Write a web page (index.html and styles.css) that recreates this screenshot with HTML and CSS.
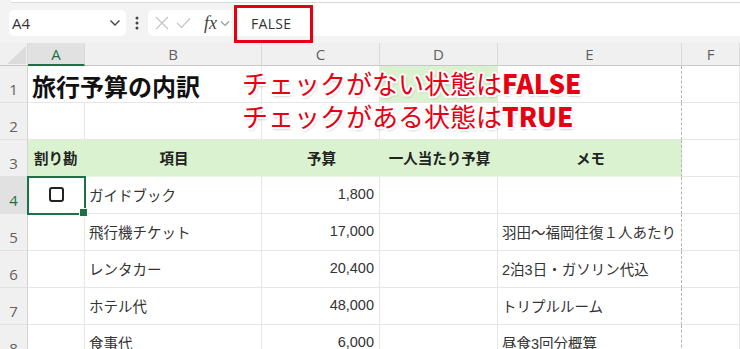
FILE: index.html
```html
<!DOCTYPE html>
<html lang="ja">
<head>
  <meta charset="UTF-8">
  <meta name="viewport" content="width=device-width, initial-scale=1.0">
  <title>旅行予算の内訳</title>
  <link rel="stylesheet" href="styles.css">
</head>
<body>

  <!-- Formula bar -->
  <div class="topbar">
    <div class="ribbon-edge"></div>
    <div class="formula-row">
      <div class="namebox">
        <span>A4</span>
        <svg width="12" height="8" viewBox="0 0 12 8"><path d="M1.5 1.5 L6 6 L10.5 1.5" fill="none" stroke="#444" stroke-width="1.4"/></svg>
      </div>
      <div class="more">
        <svg width="4" height="14" viewBox="0 0 4 14"><circle cx="2" cy="2" r="1.5" fill="#444"/><circle cx="2" cy="7" r="1.5" fill="#444"/><circle cx="2" cy="12" r="1.5" fill="#444"/></svg>
      </div>
      <div class="fx-tools">
        <svg width="14" height="14" viewBox="0 0 14 14"><path d="M1 1 L13 13 M13 1 L1 13" stroke="#c4c4c4" stroke-width="1.2"/></svg>
        <svg width="15" height="12" viewBox="0 0 15 12"><path d="M1 6 L5.5 10.5 L14 1.5" fill="none" stroke="#c4c4c4" stroke-width="1.2"/></svg>
        <span class="fx">fx</span>
        <svg width="10" height="7" viewBox="0 0 10 7"><path d="M1 1.5 L5 5.5 L9 1.5" fill="none" stroke="#999" stroke-width="1.2"/></svg>
      </div>
      <div class="formula-input"><span>FALSE</span></div>
    </div>
  </div>

  <!-- Sheet -->
  <div class="sheet">
    <div class="corner"><svg width="28" height="23" viewBox="0 0 28 23"><polygon points="7,21 26,21 26,3" fill="#dcdcdc"/></svg></div>
    <div class="colhead active">A</div>
    <div class="colhead">B</div>
    <div class="colhead">C</div>
    <div class="colhead">D</div>
    <div class="colhead">E</div>
    <div class="colhead">F</div>

    <div class="rowhead">1</div>
    <div class="cell title">旅行予算の内訳</div>
    <div class="cell"></div>
    <div class="cell fill"></div>
    <div class="cell pagebreak"></div>
    <div class="cell"></div>

    <div class="rowhead">2</div>
    <div class="cell"></div>
    <div class="cell"></div>
    <div class="cell"></div>
    <div class="cell"></div>
    <div class="cell pagebreak"></div>
    <div class="cell"></div>

    <div class="rowhead">3</div>
    <div class="cell hcell">割り勘</div>
    <div class="cell hcell center">項目</div>
    <div class="cell hcell center">予算</div>
    <div class="cell hcell center">一人当たり予算</div>
    <div class="cell hcell center pagebreak">メモ</div>
    <div class="cell"></div>

    <div class="rowhead active">4</div>
    <div class="cell selected"><span class="checkbox"></span></div>
    <div class="cell">ガイドブック</div>
    <div class="cell num">1,800</div>
    <div class="cell"></div>
    <div class="cell pagebreak"></div>
    <div class="cell"></div>

    <div class="rowhead">5</div>
    <div class="cell"></div>
    <div class="cell">飛行機チケット</div>
    <div class="cell num">17,000</div>
    <div class="cell"></div>
    <div class="cell pagebreak">羽田～福岡往復１人あたり</div>
    <div class="cell"></div>

    <div class="rowhead">6</div>
    <div class="cell"></div>
    <div class="cell">レンタカー</div>
    <div class="cell num">20,400</div>
    <div class="cell"></div>
    <div class="cell pagebreak">2泊3日・ガソリン代込</div>
    <div class="cell"></div>

    <div class="rowhead">7</div>
    <div class="cell"></div>
    <div class="cell">ホテル代</div>
    <div class="cell num">48,000</div>
    <div class="cell"></div>
    <div class="cell pagebreak">トリプルルーム</div>
    <div class="cell"></div>

    <div class="rowhead">8</div>
    <div class="cell"></div>
    <div class="cell">食事代</div>
    <div class="cell num">6,000</div>
    <div class="cell"></div>
    <div class="cell pagebreak">昼食3回分概算</div>
    <div class="cell"></div>
  </div>

  <!-- Annotations -->
  <div class="callout-box"></div>
  <div class="note">
    <div>チェックがない状態は<b>FALSE</b></div>
    <div>チェックがある状態は<b>TRUE</b></div>
  </div>

</body>
</html>
```

FILE: styles.css
```css
* {
  box-sizing: border-box;
}
body {
  margin: 0;
  width: 740px;
  height: 349px;
  overflow: hidden;
  position: relative;
  background: #f3f3f3;
  font-family: "Open Sans", "Noto Sans CJK JP", sans-serif;
}

/* Formula bar */
.topbar {
  height: 43px;
  background: #f3f3f3;
}
.ribbon-edge {
  height: 3px;
  margin-left: 10px;
  background: #fff;
  border-bottom: 1px solid #d8d8d8;
  border-radius: 0 0 0 4px;
}
.formula-row {
  display: flex;
  align-items: flex-start;
}
.namebox {
  margin: 7px 0 0 9px;
  width: 117px;
  height: 26px;
  background: #fff;
  border-radius: 5px;
  display: flex;
  align-items: center;
  justify-content: space-between;
  padding: 0 5px 0 3px;
  font-size: 15px;
  color: #333;
}
.more {
  width: 22px;
  height: 26px;
  margin-top: 7px;
  display: flex;
  align-items: center;
  justify-content: center;
}
.fx-tools {
  margin-top: 7px;
  width: 84px;
  height: 26px;
  background: #fff;
  border-radius: 5px 0 0 5px;
  display: flex;
  align-items: center;
  gap: 7px;
  padding-left: 7px;
}
.fx {
  font-family: "Liberation Serif", serif;
  font-style: italic;
  font-size: 18px;
  color: #444;
  margin-left: 6px;
  margin-right: -4px;
}
.formula-input {
  flex: 1;
  height: 33px;
  margin-left: 1px;
  background: #fff;
  display: flex;
  align-items: center;
  padding: 8px 0 0 18px;
  font-size: 14px;
  letter-spacing: 0.3px;
  color: #333;
}

/* Sheet grid */
.sheet {
  display: grid;
  grid-template-columns: 28px 57px 177px 118px 118px 184px 58px;
  grid-template-rows: 23px;
  grid-auto-rows: 37px;
}
.corner {
  background: #f0f0f0;
  border-right: 1px solid #dadada;
  border-bottom: 1px solid #c8c8c8;
}
.corner svg {
  display: block;
}
.colhead {
  background: #f0f0f0;
  border-right: 1px solid #dadada;
  border-bottom: 1px solid #c8c8c8;
  color: #5f5f5f;
  font-size: 15px;
  display: flex;
  align-items: center;
  justify-content: center;
}
.colhead.active {
  background: #e1e1e1;
  color: #1e7145;
  border-bottom: 2px solid #1e7145;
}
.rowhead {
  background: #f0f0f0;
  border-right: 1px solid #d4d4d4;
  border-bottom: 1px solid #e1e1e1;
  color: #616161;
  font-size: 15px;
  display: flex;
  align-items: flex-end;
  justify-content: center;
  padding-bottom: 3px;
}
.rowhead.active {
  background: #e1e1e1;
  color: #1e7145;
}
.cell {
  background: #fff;
  border-right: 1px solid #e6e6e6;
  border-bottom: 1px solid #e6e6e6;
  display: flex;
  align-items: center;
  padding: 0 4px 2px;
  white-space: nowrap;
  font-family: "Liberation Sans", "Noto Sans CJK JP", sans-serif;
  font-size: 14.5px;
  color: #333;
}
.cell.num {
  justify-content: flex-end;
  padding-right: 5px;
}
.cell.title {
  grid-column: span 2;
  font-family: "Noto Sans CJK JP", sans-serif;
  font-size: 24px;
  font-weight: 700;
  color: #111;
  padding: 3px 0 0 4px;
}
.cell.fill {
  background: #daf2d0;
  border-right-color: #daf2d0;
}
.cell.hcell {
  background: #daf2d0;
  border-right-color: #daf2d0;
  border-bottom-color: #e9f6e3;
  font-family: "Noto Sans CJK JP", sans-serif;
  font-weight: 700;
  font-size: 14.5px;
  color: #222;
  padding-left: 6px;
}
.cell.center {
  justify-content: center;
}
.cell.pagebreak {
  border-right: 1px dashed #b4b4b4;
}
.cell.selected {
  position: relative;
  justify-content: center;
  outline: 2px solid #1e7145;
  outline-offset: -1px;
  z-index: 1;
}
.cell.selected::after {
  content: "";
  position: absolute;
  right: -4px;
  bottom: -4px;
  width: 7px;
  height: 7px;
  background: #1e7145;
  border: 1px solid #fff;
}
.checkbox {
  width: 15px;
  height: 15px;
  border: 2px solid #222;
  border-radius: 3px;
}

/* Annotations */
.callout-box {
  position: absolute;
  left: 234px;
  top: 5px;
  width: 79px;
  height: 38px;
  border: 3px solid #e60012;
}
.note {
  position: absolute;
  left: 242px;
  top: 66px;
  font-family: "Noto Sans CJK JP", sans-serif;
  font-size: 26px;
  line-height: 33px;
  font-weight: 400;
  color: #e60012;
  white-space: nowrap;
  text-shadow: -2px 0 #fff, 2px 0 #fff, 0 -2px #fff, 0 2px #fff,
    -1.5px -1.5px #fff, 1.5px -1.5px #fff, -1.5px 1.5px #fff, 1.5px 1.5px #fff,
    1px 2px 3px rgba(0, 0, 0, 0.35);
}
.note b {
  font-weight: 900;
}
```
